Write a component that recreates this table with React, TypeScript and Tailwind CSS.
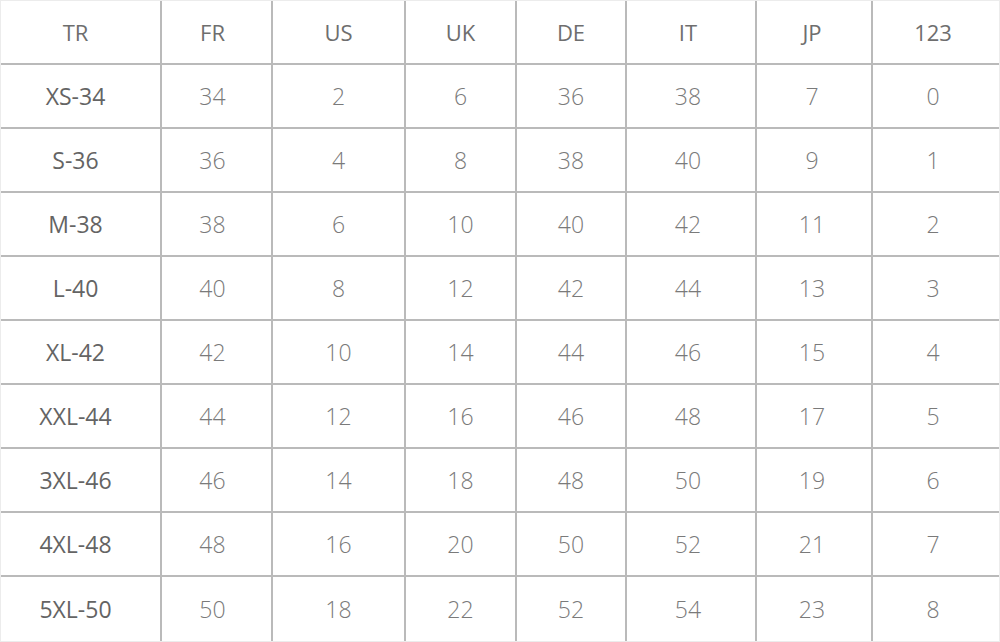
import React from "react";

const header = ["TR", "FR", "US", "UK", "DE", "IT", "JP", "123"];
const rows: string[][] = [
  ["XS-34", "34", "2", "6", "36", "38", "7", "0"],
  ["S-36", "36", "4", "8", "38", "40", "9", "1"],
  ["M-38", "38", "6", "10", "40", "42", "11", "2"],
  ["L-40", "40", "8", "12", "42", "44", "13", "3"],
  ["XL-42", "42", "10", "14", "44", "46", "15", "4"],
  ["XXL-44", "44", "12", "16", "46", "48", "17", "5"],
  ["3XL-46", "46", "14", "18", "48", "50", "19", "6"],
  ["4XL-48", "48", "16", "20", "50", "52", "21", "7"],
  ["5XL-50", "50", "18", "22", "52", "54", "23", "8"],
];

const pads = ["pr-[10px]", "pr-[8px]", "", "", "", "pr-[6px]", "pr-[4px]", "pr-[6px]"];

export default function App() {
  const all = [header, ...rows];
  return (
    <div className="w-[1000px] h-[642px] bg-white border border-[#ececec] overflow-hidden" style={{ fontFamily: '"Open Sans", "Liberation Sans", sans-serif' }}>
      <div className="grid h-full grid-cols-[161px_111px_133px_111px_110px_130px_116px_1fr] grid-rows-10">
        {all.map((r, ri) =>
          r.map((c, ci) => {
            const isLastCol = ci === r.length - 1;
            const isLastRow = ri === all.length - 1;
            const first = ci === 0 && ri > 0;
            return (
              <div
                key={ri + "-" + ci}
                className={
                  "flex items-center justify-center " +
                  pads[ci] + " " +
                  (isLastCol ? "" : "border-r-2 border-r-[#bababa] ") +
                  (isLastRow ? "" : "border-b-2 border-b-[#bababa] ") +
                  (first ? "text-[23px] text-[#646464] font-normal" : ri === 0 ? "text-[22px] text-[#6e6e6e] font-normal" : "text-[23px] text-[#7a7a7a] font-light")
                }
              >
                {c}
              </div>
            );
          })
        )}
      </div>
    </div>
  );
}
